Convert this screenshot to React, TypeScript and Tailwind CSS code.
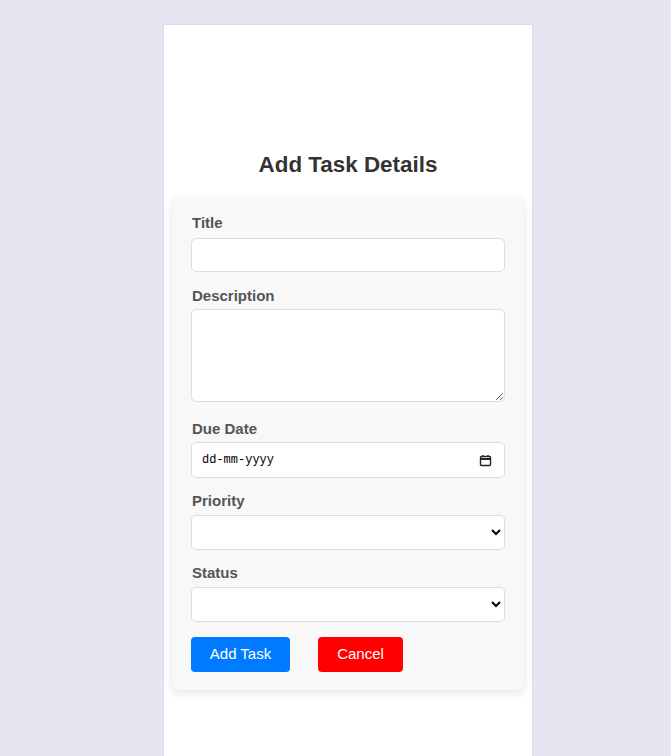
import React, { useState } from "react";

function Label({ children, className = "" }: { children: React.ReactNode; className?: string }) {
  return (
    <label className={`block pl-[1px] text-[15px] leading-[18px] font-bold text-[#555] ${className}`}>
      {children}
    </label>
  );
}

export default function App() {
  const [title, setTitle] = useState("");
  const [description, setDescription] = useState("");

  return (
    <div className="min-h-screen bg-[#e6e6f2] pt-[24px] font-['Liberation_Sans',Arial,sans-serif]">
      <div className="ml-[163px] w-[370px] min-h-[732px] border border-b-0 border-[#dcdce4] bg-white px-[8px] pt-[126px]">
        <h2 className="text-center text-[22.4px] leading-[28px] font-bold text-[#333]">Add Task Details</h2>

        {/* form card */}
        <div className="mt-[18px] rounded-[8px] bg-[#f8f8f8] px-[19px] pt-[17px] pb-[18px] shadow-[0_3px_10px_rgba(0,0,0,0.11)]">
          <Label className="mb-[6px]">Title</Label>
          <input
            value={title}
            onChange={(e) => setTitle(e.target.value)}
            className="block h-[34px] w-full rounded-[5px] border border-[#ddd] bg-white px-[10px] text-[14px]"
          />

          <Label className="mt-[15px] mb-[4px]">Description</Label>
          <textarea
            value={description}
            onChange={(e) => setDescription(e.target.value)}
            className="block h-[93px] w-full rounded-[5px] border border-[#ddd] bg-white px-[10px] py-[8px] text-[14px]"
          />

          <Label className="mt-[18px] mb-[4px]">Due Date</Label>
          <div className="flex h-[36px] w-full items-center justify-between rounded-[5px] border border-[#ddd] bg-white pr-[12px] pl-[10px]">
            <span className="font-['Liberation_Mono',monospace] text-[12px] text-black">dd-mm-yyyy</span>
            <svg width="13" height="13" viewBox="0 0 13 13" fill="none" stroke="#222" strokeWidth="1.4">
              <rect x="1.5" y="2.5" width="10" height="9" rx="1" />
              <line x1="1.5" y1="5" x2="11.5" y2="5" strokeWidth="2" />
              <line x1="4" y1="1" x2="4" y2="3" />
              <line x1="9" y1="1" x2="9" y2="3" />
            </svg>
          </div>

          <Label className="mt-[14px] mb-[5px]">Priority</Label>
          <select className="block h-[35px] w-full rounded-[5px] border border-[#ddd] bg-white px-[8px] text-[14px]">
            <option value=""></option>
            <option>Low</option>
            <option>Medium</option>
            <option>High</option>
          </select>

          <Label className="mt-[14px] mb-[5px]">Status</Label>
          <select className="block h-[35px] w-full rounded-[5px] border border-[#ddd] bg-white px-[8px] text-[14px]">
            <option value=""></option>
            <option>Pending</option>
            <option>In Progress</option>
            <option>Completed</option>
          </select>

          <div className="mt-[15px] flex gap-[28px]">
            <button className="h-[35px] w-[99px] rounded-[4px] bg-[#007bff] text-[15px] text-white">Add Task</button>
            <button className="h-[35px] w-[85px] rounded-[4px] bg-[#ff0000] text-[15px] text-white">Cancel</button>
          </div>
        </div>
      </div>
    </div>
  );
}
